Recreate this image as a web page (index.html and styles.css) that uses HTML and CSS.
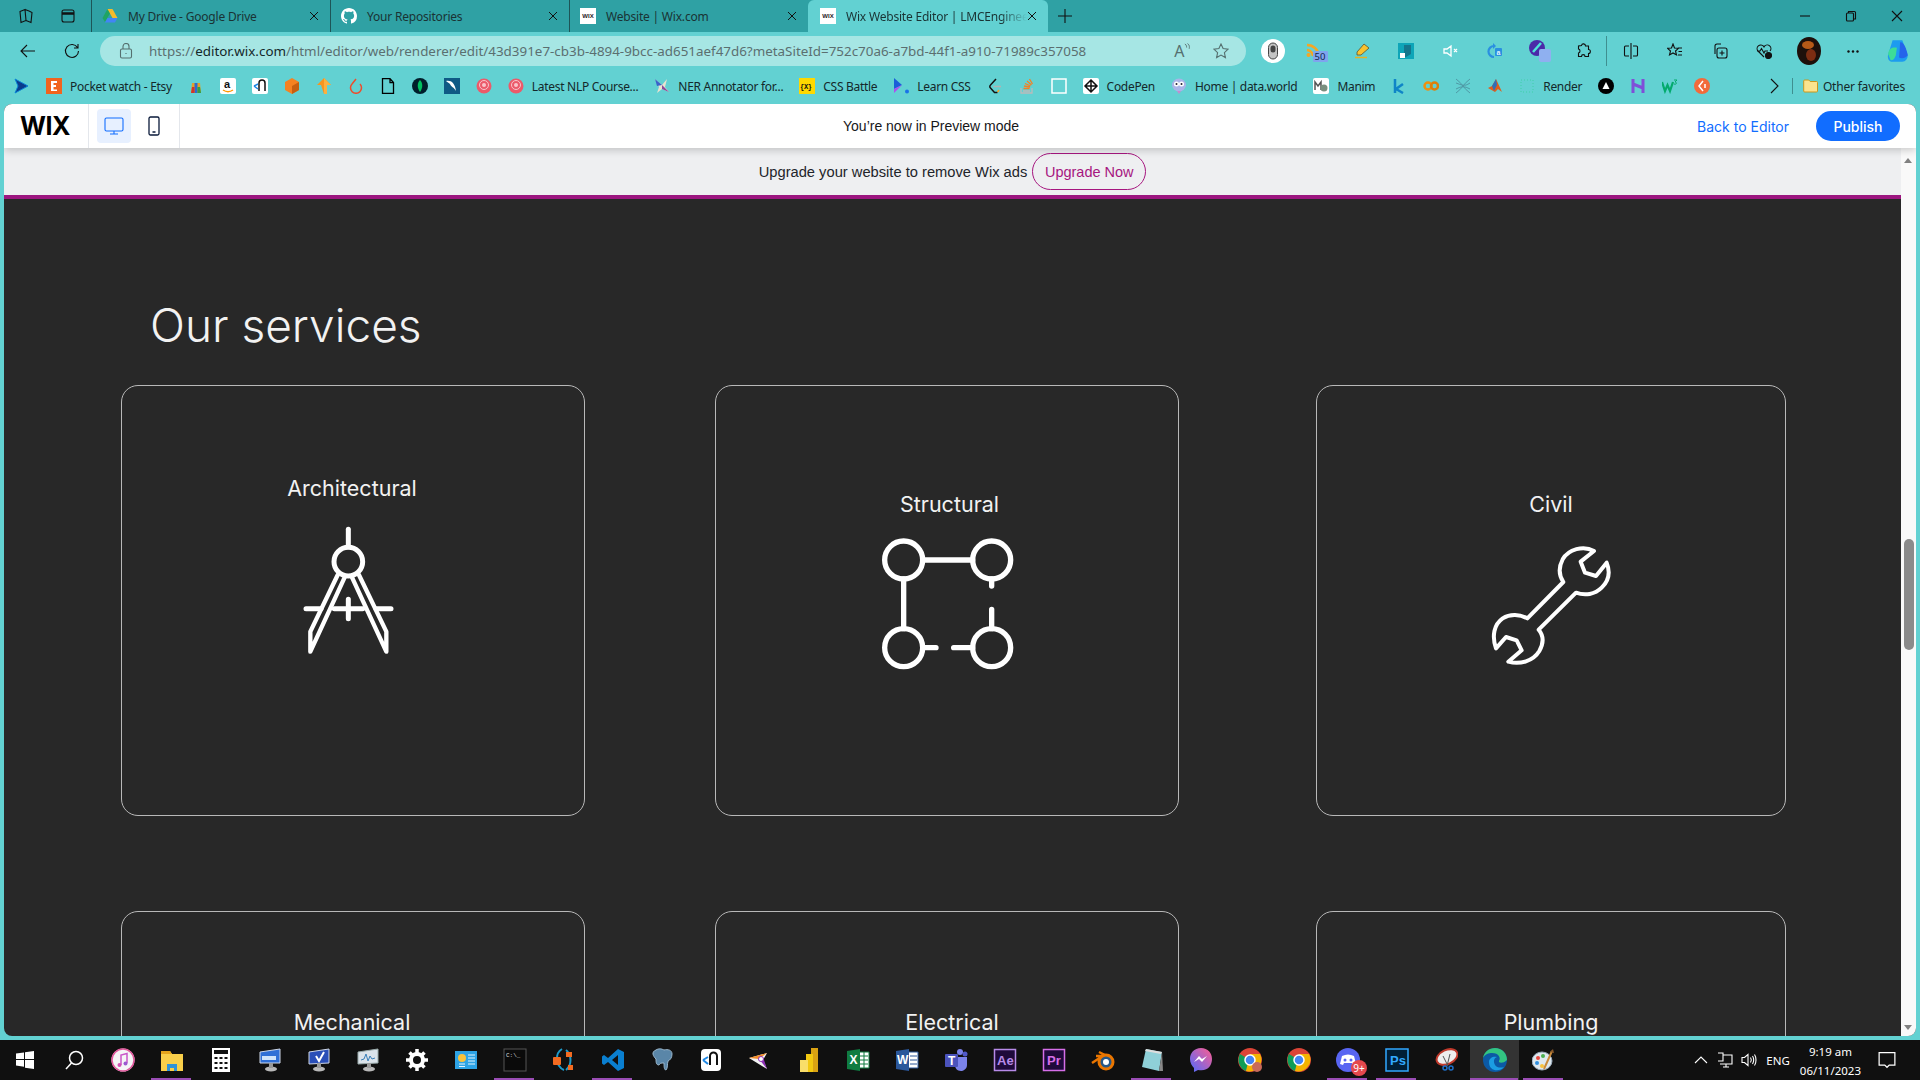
FILE: index.html
```html
<!DOCTYPE html>
<html lang="en">

<head>
    <meta charset="UTF-8">
    <title>Wix Website Editor | LMCEngineering</title>
    <link rel="stylesheet" href="styles.css">
</head>

<body>
    <!-- tab strip -->
    <div class="tabstrip">
        <div class="strip-btn"><svg class="ico" viewBox="0 0 16 16"><path d="M2 3.500l5-2 1 11-5 2zM7 1.500l4 1.500M11 3l3 1.500-1 10-5-2" /></svg></div>
        <div class="strip-btn"><svg class="ico" viewBox="0 0 16 16"><rect x="2" y="2" width="12" height="12" rx="2" /><path d="M2 5.500h12" stroke-width="2.500" /></svg></div>
        <div class="tab">
            <svg class="fav" viewBox="0 0 16 16"><path d="M5.500 1h5l-2.500 5-2.500-4z" fill="#f7bb2a" /><path d="M10.500 1l5 9h-5L7.700 5z" fill="#f7bb2a" /><path d="M5.500 1L.500 10l2.500 4 5-8.500z" fill="#1fa463" /><path d="M3 14.500h10l2.500-4.500H5.500z" fill="#4285f4" /></svg>
            <span class="tab-title">My Drive - Google Drive</span>
            <svg class="tab-x" viewBox="0 0 10 10"><path d="M1 1l8 8M9 1L1 9" /></svg>
        </div>
        <div class="tab">
            <svg class="fav" viewBox="0 0 16 16"><path fill="#fff" d="M8 0C3.580 0 0 3.580 0 8c0 3.540 2.290 6.530 5.470 7.590.4.07.55-.17.55-.38 0-.19-.01-.82-.01-1.490-2.010.37-2.530-.49-2.690-.94-.09-.23-.48-.94-.82-1.130-.28-.15-.68-.52-.01-.53.63-.01 1.080.58 1.230.82.72 1.210 1.870.87 2.330.66.07-.52.28-.87.51-1.070-1.780-.2-3.640-.89-3.640-3.950 0-.87.31-1.590.82-2.150-.08-.2-.36-1.020.08-2.120 0 0 .67-.21 2.200.82.64-.18 1.320-.27 2-.27.68 0 1.360.09 2 .27 1.530-1.040 2.200-.82 2.200-.82.44 1.100.16 1.920.08 2.120.51.56.82 1.270.82 2.150 0 3.070-1.870 3.750-3.650 3.950.29.25.54.73.54 1.480 0 1.070-.01 1.930-.01 2.200 0 .21.15.46.55.38A8.013 8.013 0 0016 8c0-4.420-3.580-8-8-8z" /></svg>
            <span class="tab-title">Your Repositories</span>
            <svg class="tab-x" viewBox="0 0 10 10"><path d="M1 1l8 8M9 1L1 9" /></svg>
        </div>
        <div class="tab">
            <span class="wix-fav">WIX</span>
            <span class="tab-title">Website | Wix.com</span>
            <svg class="tab-x" viewBox="0 0 10 10"><path d="M1 1l8 8M9 1L1 9" /></svg>
        </div>
        <div class="tab active">
            <span class="wix-fav">WIX</span>
            <span class="tab-title fade">Wix Website Editor | LMCEnginee</span>
            <svg class="tab-x" viewBox="0 0 10 10"><path d="M1 1l8 8M9 1L1 9" /></svg>
        </div>
        <div class="new-tab"><svg class="ico" viewBox="0 0 16 16"><path d="M8 1v14M1 8h14" /></svg></div>
        <div class="win-btns">
            <div class="win-btn"><svg class="ico small" viewBox="0 0 12 12"><path d="M1 6h10" /></svg></div>
            <div class="win-btn"><svg class="ico small" viewBox="0 0 12 12"><rect x="1.500" y="3" width="7" height="8" rx="1" /><path d="M3.500 3V1.500h6a1 1 0 0 1 1 1V9H8.500" /></svg></div>
            <div class="win-btn"><svg class="ico small" viewBox="0 0 12 12"><path d="M1 1l10 10M11 1L1 11" /></svg></div>
        </div>
    </div>

    <!-- address bar -->
    <div class="toolbar">
        <div class="tool"><svg class="ico" viewBox="0 0 16 16"><path d="M15 8H1M7 2L1 8l6 6" /></svg></div>
        <div class="tool"><svg class="ico" viewBox="0 0 16 16"><path d="M13.500 4.500A6.500 6.500 0 1 0 14.500 8M14 1v4h-4" /></svg></div>
        <div class="omnibox">
            <svg class="ico grey" viewBox="0 0 16 16"><rect x="2.500" y="6" width="11" height="9" rx="1.500" /><path d="M5 6V3.500a3 3 0 0 1 6 0V6M8 10v1" /></svg>
            <span class="url">https://<b>editor.wix.com</b>/html/editor/web/renderer/edit/43d391e7-cb3b-4894-9bcc-ad651aef47d6?metaSiteId=752c70a6-a7bd-44f1-a910-71989c357058</span>
            <div class="omni-end">
                <span class="read-aloud">A<svg class="ico grey mini" viewBox="0 0 8 10"><path d="M1 1c2 1 2 3 2 4M4 .5c3 2 2 5 2 6" /></svg></span>
                <svg class="ico grey star" viewBox="0 0 16 16"><path d="M8 1l2.100 4.600 5 .6-3.700 3.400 1 5L8 12.100 3.600 14.600l1-5L.9 6.200l5-.6z" /></svg>
            </div>
        </div>
        <div class="tools">
            <div class="tool"><svg class="ext" viewBox="0 0 24 24"><circle cx="12" cy="12" r="12" fill="#fff" /><rect x="7.500" y="4" width="9" height="16" rx="4.500" fill="#c4c4c4" stroke="#444" /><rect x="9.500" y="6.500" width="5" height="7" rx="2.500" fill="#444" /></svg></div>
            <div class="tool"><svg class="ext s22" viewBox="0 0 22 22"><path d="M1 5a12 12 0 0 1 12 11M1 10a7 7 0 0 1 6 6" fill="none" stroke="#f5a623" stroke-width="2.500" /><circle cx="2.500" cy="15" r="2" fill="#f5a623" /><rect x="7" y="11" width="15" height="11" rx="1" fill="#7fa4ee" /><text x="8.500" y="20.300" class="ext-num">50</text></svg></div>
            <div class="tool"><svg class="ext s16" viewBox="0 0 16 16"><path d="M3 9l7-8 5 4-8 7H3z" fill="#f9c22e" stroke="#5b5330" stroke-width=".8" /><path d="M1 14.500h12" stroke="#e8b21f" stroke-width="1.500" /></svg></div>
            <div class="tool"><svg class="ext s16" viewBox="0 0 16 16"><rect width="16" height="16" fill="#0ea5b8" /><path d="M6 2h7v9l-5 3H6z" fill="#14768c" /><rect x="2" y="10" width="5" height="5" fill="#fff" /></svg></div>
            <div class="tool"><svg class="ico white" viewBox="0 0 16 16"><path d="M1 6h3l4-3v10l-4-3H1zM11 6l3 3M14 6l-3 3" stroke-width="1.300" /></svg></div>
            <div class="tool"><svg class="ext s16" viewBox="0 0 16 16"><path d="M7 3a5.500 5.500 0 1 0 0 11" fill="none" stroke="#2a8fe0" stroke-width="2.200" /><path d="M6 0l3 3-3 3z" fill="#2a8fe0" /><rect x="8" y="5" width="7" height="8" rx="1" fill="#2a8fe0" /><text x="9.500" y="11.500" class="ext-a">a</text></svg></div>
            <div class="tool"><svg class="ext s22" viewBox="0 0 22 22"><circle cx="8" cy="8" r="8" fill="#4b2aa8" /><path d="M4 12l8-9" stroke="#4fe3d9" stroke-width="2.500" /><rect x="10" y="9" width="12" height="13" rx="2" fill="#8fb0f0" /></svg></div>
            <div class="tool sep"><svg class="ico" viewBox="0 0 16 16"><path d="M5.500 2.500c.5-2.500 4-2 4 .500h3v3.500c2.500 0 2.500 4 0 4v3H9c0-2.500-3.500-2.500-3.500 0h-3v-3.500c2-.5 2-3.500 0-4V3z" /></svg></div>
            <div class="tool after-sep"><svg class="ico" viewBox="0 0 16 16"><path d="M8 0v16M6 3H2.500a1 1 0 0 0-1 1v8a1 1 0 0 0 1 1H6M10 3h3.500a1 1 0 0 1 1 1v8a1 1 0 0 1-1 1H10" /></svg></div>
            <div class="tool"><svg class="ico" viewBox="0 0 16 16"><path d="M6 1l1.500 4 4 .3-3 2.700 1 4L6 10l-3.500 2 1-4-3-2.700 4-.3zM11 5h4M11.500 8.500H15M11 12h4" /></svg></div>
            <div class="tool"><svg class="ico" viewBox="0 0 16 16"><path d="M3 11V3a2 2 0 0 1 2-2h4" /><rect x="5" y="5" width="10" height="10" rx="2" /><path d="M10 7.500v5M7.500 10h5" /></svg></div>
            <div class="tool"><svg class="ico" viewBox="0 0 16 16"><path d="M8 14L2 8a3.600 3.600 0 0 1 5.500-4.800L8 4l.5-.8A3.600 3.600 0 0 1 14 8M1 8h3l1.500-2.500L8 10l1-2h3" /><circle cx="12.500" cy="12.500" r="3" fill="#111" /></svg></div>
            <div class="tool"><svg class="ext avatar" viewBox="0 0 24 28"><ellipse cx="12" cy="14" rx="12" ry="14" fill="#1d100b" /><ellipse cx="11" cy="8" rx="6" ry="4" fill="#b65a18" /><ellipse cx="14" cy="18" rx="5" ry="6" fill="#7c2d12" /></svg></div>
            <div class="tool"><svg class="dots" viewBox="0 0 12 3"><circle cx="1.500" cy="1.500" r="1.200" /><circle cx="6" cy="1.500" r="1.200" /><circle cx="10.500" cy="1.500" r="1.200" /></svg></div>
            <div class="tool"><svg class="ext copilot" viewBox="0 0 24 24"><path d="M7 2h9l5 14c0 3-2 6-5 6H7c-4 0-5-4-4-7z" fill="#1d9bf0" /><path d="M3 15c0-6 5-7 8-6l-1 7c-1 3-3 6-5 4z" fill="#3ddc97" /><path d="M14 4c3-1 6 6 7 12-2 3-6 3-8 2z" fill="#2563eb" /></svg></div>
        </div>
    </div>

    <!-- favorites bar -->
    <div class="bookmarks">
        <div class="bm first"><svg class="fav" viewBox="0 0 16 16"><path d="M2 1l13 7-13 7 3-7z" fill="#0b3c8c" stroke="#0a84d6" /></svg></div>
        <div class="bm"><svg class="fav" viewBox="0 0 16 16"><rect width="16" height="16" fill="#f1641e" /><path d="M5 3h6v2H7.500v2H10v2H7.500v2.500H11V13H5z" fill="#fff" /></svg><span>Pocket watch - Etsy</span></div>
        <div class="bm"><svg class="fav" viewBox="0 0 16 16"><path d="M4 5h8l1 10H3z" fill="#e3a12a" /><path d="M6.500 5h3v10h-3z" fill="#2a6bd1" /><path d="M4 9h2.500v6H3z" fill="#d1352a" /><path d="M9.500 9H12l1 6H9.500z" fill="#2f9e46" /></svg></div>
        <div class="bm"><svg class="fav" viewBox="0 0 16 16"><rect width="16" height="16" rx="2" fill="#fff" /><text x="4" y="10" class="fav-a">a</text><path d="M3 12c3 2 7 2 10 0" fill="none" stroke="#f90" stroke-width="1.500" /></svg></div>
        <div class="bm"><svg class="fav" viewBox="0 0 16 16"><rect width="16" height="16" rx="2" fill="#fff" /><path d="M7 13V5a3 3 0 0 1 6 0v8" fill="none" stroke="#111" stroke-width="1.500" /><path d="M2 8l4-2M2 8l4 3" stroke="#1e88e5" stroke-width="1.500" /></svg></div>
        <div class="bm"><svg class="fav" viewBox="0 0 16 16"><path d="M8 0l7 4v8l-7 4-7-4V4z" fill="#f58220" /><path d="M8 8l7-4v8l-7 4z" fill="#c75f10" /></svg></div>
        <div class="bm"><svg class="fav" viewBox="0 0 16 16"><path d="M8 0l7 7h-4v9H8L5 7H1z" fill="#f7941e" /><path d="M8 0l7 7h-4v9H8z" fill="#fbb040" /></svg></div>
        <div class="bm"><svg class="fav" viewBox="0 0 16 16"><path d="M8 1L4 6a5.500 5.500 0 1 0 8 0" fill="none" stroke="#ee4c2c" stroke-width="1.500" /></svg></div>
        <div class="bm"><svg class="fav" viewBox="0 0 16 16"><path d="M2.500 .7H10L13.500 4.500v10.800h-11zM10 .7v4h3.500" fill="#62d1d2" stroke="#000" stroke-width="1.300" /></svg></div>
        <div class="bm"><svg class="fav" viewBox="0 0 16 16"><circle cx="8" cy="8" r="8" fill="#001e2b" /><path d="M8 2c3 3 3 8 0 12-3-4-3-9 0-12z" fill="#00c060" /></svg></div>
        <div class="bm"><svg class="fav" viewBox="0 0 16 16"><rect width="16" height="16" fill="#0f5a85" /><path d="M2 3c5-1 9 2 10 10-2-4-5-4-6-7-1-1-3-2-4-3z" fill="#fff" /></svg></div>
        <div class="bm"><svg class="fav" viewBox="0 0 16 16"><circle cx="8" cy="8" r="7.500" fill="#ec5a6a" /><circle cx="8" cy="7" r="4.500" fill="none" stroke="#f9c3c9" /><circle cx="8" cy="7" r="2" fill="#f9c3c9" /></svg></div>
        <div class="bm"><svg class="fav" viewBox="0 0 16 16"><circle cx="8" cy="8" r="7.500" fill="#ec5a6a" /><circle cx="8" cy="7" r="4.500" fill="none" stroke="#f9c3c9" /><circle cx="8" cy="7" r="2" fill="#f9c3c9" /></svg><span>Latest NLP Course...</span></div>
        <div class="bm"><svg class="fav" viewBox="0 0 16 16"><path d="M1 1l7 6 5-6-2 8 4 5-7-3-5 4 2-6z" fill="#e9e2d0" /><path d="M1 1l7 6-5 1z" fill="#3a63c9" /><path d="M8 7l7 7-7-3z" fill="#8a4a9c" /></svg><span>NER Annotator for...</span></div>
        <div class="bm"><svg class="fav" viewBox="0 0 16 16"><rect width="16" height="16" fill="#ffd900" /><text x="1" y="11" class="fav-x">{X}</text></svg><span>CSS Battle</span></div>
        <div class="bm"><svg class="fav" viewBox="0 0 16 16"><path d="M1 0l8 7-8 4z" fill="#1a5fd8" /><path d="M1 11l8-4-8 8z" fill="#b04cf0" /><circle cx="14" cy="13.500" r="2" fill="#1a73e8" /></svg><span>Learn CSS</span></div>
        <div class="bm"><svg class="fav" viewBox="0 0 16 16"><path d="M9 1L3.500 7a2 2 0 0 0 0 3l4 4.500h3" fill="none" stroke="#111" stroke-width="1.500" /><path d="M6.500 8.500H14" stroke="#b3b3b3" stroke-width="1.500" /><path d="M10.500 14l1.500-2" stroke="#f89f1b" stroke-width="1.500" /></svg></div>
        <div class="bm"><svg class="fav" viewBox="0 0 16 16"><path d="M2 10v5h11v-5M4 13h7" fill="none" stroke="#bcbbbb" stroke-width="1.300" /><path d="M4.500 10.500h6M5 8l6 1M6 5.500l5.500 2.500M8 3l4.500 4M10.500 1l3 5" stroke="#f48024" stroke-width="1.300" /></svg></div>
        <div class="bm"><svg class="fav" viewBox="0 0 16 16"><rect x="1" y="1" width="14" height="14" fill="#62d1d2" stroke="#fff" stroke-width="1.500" /></svg></div>
        <div class="bm"><svg class="fav" viewBox="0 0 16 16"><rect width="16" height="16" rx="2" fill="#fff" /><path d="M8 2l6 6-6 6-6-6zM8 2v12M2 8h12" fill="none" stroke="#111" stroke-width="1.500" /></svg><span>CodePen</span></div>
        <div class="bm"><svg class="fav" viewBox="0 0 16 16"><ellipse cx="8" cy="7" rx="7" ry="6.500" fill="#a9b4e8" /><circle cx="5.500" cy="6" r="2.500" fill="#fff" /><circle cx="10.500" cy="6" r="2.500" fill="#fff" /><circle cx="5.500" cy="6" r="1" fill="#223" /><circle cx="10.500" cy="6" r="1" fill="#223" /><path d="M6 13h4l-2 3z" fill="#c58bd0" /></svg><span>Home | data.world</span></div>
        <div class="bm"><svg class="fav" viewBox="0 0 16 16"><rect width="16" height="16" rx="2" fill="#fff" /><path d="M2 12V4l3 4 3-4v8" fill="none" stroke="#555" stroke-width="1.500" /><circle cx="11" cy="10" r="3.500" fill="#7a8f7f" /></svg><span>Manim</span></div>
        <div class="bm"><svg class="fav" viewBox="0 0 16 16"><path d="M4 1v14M12 6L5 11l7 4" fill="none" stroke="#0f85c7" stroke-width="2.500" /></svg></div>
        <div class="bm"><svg class="fav" viewBox="0 0 16 16"><circle cx="5" cy="8" r="3.500" fill="none" stroke="#f0900f" stroke-width="2.500" /><circle cx="11.500" cy="8" r="3.500" fill="none" stroke="#dd7f0a" stroke-width="2.500" /></svg></div>
        <div class="bm"><svg class="fav" viewBox="0 0 16 16"><path d="M1 1c6 4 8 10 14 14M15 1C9 5 7 11 1 15M1 5c6 2 8 4 14 0M1 11c6-3 8-3 14 0" fill="none" stroke="#4f9aa6" /></svg></div>
        <div class="bm"><svg class="fav" viewBox="0 0 16 16"><path d="M1 10l4-2 4-7 6 13-4-3-3 3z" fill="#e05d1a" /><path d="M5 8l4-7 1 6-3 6z" fill="#2f6fb8" /></svg></div>
        <div class="bm"><svg class="fav" viewBox="0 0 16 16"><rect x="2" y="2" width="12" height="12" fill="none" stroke="#3fd0a8" stroke-dasharray="1 2" /></svg><span>Render</span></div>
        <div class="bm"><svg class="fav" viewBox="0 0 16 16"><circle cx="8" cy="8" r="8" fill="#000" /><path d="M8 4l3.500 7h-7z" fill="#fff" /></svg></div>
        <div class="bm"><svg class="fav" viewBox="0 0 16 16"><path d="M3 1v14M13 1v14M3 6l10 4" fill="none" stroke="#7f4fd8" stroke-width="3" /></svg></div>
        <div class="bm"><svg class="fav" viewBox="0 0 16 16"><path d="M0 4l3 9 2.500-6 2.500 6 3-9" fill="none" stroke="#04aa6d" stroke-width="2.200" /><path d="M12 2h3l-2 2c2 0 2 3-1 2" fill="none" stroke="#04aa6d" /></svg></div>
        <div class="bm"><svg class="fav" viewBox="0 0 16 16"><circle cx="8" cy="8" r="8" fill="#f26b3a" /><path d="M9 3L5 8l4 5M11 6v4" fill="none" stroke="#fff" stroke-width="1.500" /></svg></div>
        <div class="bm-more"><svg class="ico" viewBox="0 0 16 16"><path d="M5 1l7 7-7 7" /></svg></div>
        <div class="bm other"><svg class="fav" viewBox="0 0 16 16"><path d="M.7 3a1 1 0 0 1 1-1h4l1.500 1.500h6.300a1 1 0 0 1 1 1V13a1 1 0 0 1-1 1H1.700a1 1 0 0 1-1-1z" fill="#fbe38e" stroke="#c9971c" /></svg><span>Other favorites</span></div>
    </div>

    <!-- page in the browser window -->
    <div class="viewport">
        <div class="wix-bar">
            <div class="wix-logo">WIX</div>
            <div class="devices">
                <div class="device selected"><svg class="ico blue" viewBox="0 0 20 20"><rect x="1" y="2" width="18" height="13" rx="1.500" /><path d="M10 15v3M6 18h8" /></svg></div>
                <div class="device"><svg class="ico navy" viewBox="0 0 20 20"><rect x="5" y="1" width="10" height="18" rx="1.500" /><path d="M8.500 16h3" /></svg></div>
            </div>
            <div class="preview-note">You’re now in Preview mode</div>
            <a class="back-editor">Back to Editor</a>
            <button class="publish">Publish</button>
        </div>

        <div class="page">
            <div class="site">
                <div class="upgrade-banner">
                    <span>Upgrade your website to remove Wix ads</span>
                    <button class="upgrade-btn">Upgrade Now</button>
                </div>

                <div class="services">
                    <h1>Our services</h1>
                    <div class="service-grid">
                        <div class="card">
                            <h3 class="shift-left">Architectural</h3>
                            <svg class="service-icon compass" viewBox="0 0 450 480">
                                <path d="M232 58V110" />
                                <circle cx="232" cy="155" r="43" />
                                <path d="M105 296H150M190 296H275M315 296H360M232 268V326" />
                                <path d="M200 195L118 365V425L222 200" stroke-width="13" />
                                <path d="M264 195L346 365V425L242 200" stroke-width="13" />
                            </svg>
                        </div>
                        <div class="card">
                            <h3 class="low nudge">Structural</h3>
                            <svg class="service-icon structure" viewBox="0 0 480 480">
                                <circle cx="128" cy="120" r="57" />
                                <circle cx="392" cy="120" r="57" />
                                <circle cx="128" cy="383" r="57" />
                                <circle cx="392" cy="383" r="57" />
                                <path d="M185 120H335M128 177V326M392 177V198M392 268V326M185 383H225M278 383H335" />
                            </svg>
                        </div>
                        <div class="card wide">
                            <h3 class="low">Civil</h3>
                            <svg class="service-icon wrench" viewBox="0 0 450 450">
                                <path stroke-width="12" d="M372 60C340 42 295 55 278 85C265 110 268 135 280 153L172 262C150 250 120 248 98 262C72 280 65 315 78 352L108 318L140 328L155 358L115 392C150 402 190 390 208 360C222 335 222 315 206 296L318 185C345 195 375 190 395 170C418 148 420 120 410 95L378 135L345 125L332 92Z" />
                            </svg>
                        </div>
                        <div class="card row-two"><h3 class="shift-left">Mechanical</h3></div>
                        <div class="card row-two"><h3 class="nudge-more">Electrical</h3></div>
                        <div class="card wide row-two"><h3>Plumbing</h3></div>
                    </div>
                </div>
            </div>
            <div class="scrollbar">
                <span class="arrow-up"></span>
                <span class="thumb"></span>
                <span class="arrow-down"></span>
            </div>
        </div>
    </div>

    <!-- windows taskbar -->
    <div class="taskbar">
        <div class="task"><svg class="tb" viewBox="0 0 24 24"><path d="M3 5.500l8-1.100V11H3zM12 4.200L21 3v8h-9zM3 12h8v6.700l-8-1.100zM12 12h9v9l-9-1.200z" fill="#fff" /></svg></div>
        <div class="task"><svg class="tb" viewBox="0 0 24 24"><circle cx="14" cy="10" r="6.500" fill="none" stroke="#fff" stroke-width="1.500" /><path d="M9.500 15L4 21" stroke="#fff" stroke-width="1.500" /></svg></div>
        <div class="task"><svg class="tb" viewBox="0 0 24 24"><circle cx="12" cy="12" r="11.500" fill="#f5f5f7" /><circle cx="12" cy="12" r="11" fill="none" stroke="#e0569b" stroke-width="1.500" /><path d="M10 17V7l6-1.500V15" fill="none" stroke="#c956c9" stroke-width="1.500" /><circle cx="8.500" cy="17" r="2" fill="#d24fb5" /><circle cx="14.500" cy="15.500" r="2" fill="#9b59d0" /></svg></div>
        <div class="task on"><svg class="tb" viewBox="0 0 24 24"><path d="M1 3h9l2 3h11v17H1z" fill="#f9cf4a" /><path d="M1 3h9l2 3H1z" fill="#e5a51d" /><path d="M7 16h10v7h-3v-3h-4v3H7z" fill="#2f93d8" /></svg></div>
        <div class="task"><svg class="tb" viewBox="0 0 24 24"><rect x="3" y="0" width="18" height="24" fill="#fff" /><rect x="5" y="2" width="14" height="4" fill="#111" /><path d="M5.500 9h3v2h-3zM10.500 9h3v2h-3zM15.500 9h3v2h-3zM5.500 14h3v2h-3zM10.500 14h3v2h-3zM15.500 14h3v2h-3zM5.500 19h3v2h-3zM10.500 19h3v2h-3zM15.500 19h3v2h-3z" fill="#111" /></svg></div>
        <div class="task"><svg class="tb" viewBox="0 0 24 24"><path d="M2 4l20-3v14L2 15z" fill="#2f6fd6" stroke="#cfd8e8" /><path d="M4 8h14v4H4z" fill="#cfe3fa" /><ellipse cx="13" cy="21" rx="6" ry="2.500" fill="#b8b8b8" /><path d="M11 15h4v5h-4z" fill="#999" /></svg></div>
        <div class="task"><svg class="tb" viewBox="0 0 24 24"><path d="M2 4l20-3v14L2 16z" fill="#2a4fb8" stroke="#cfd8e8" /><path d="M9 8l3 5 5-9" fill="none" stroke="#fff" stroke-width="2" /><ellipse cx="12" cy="21" rx="6" ry="2.500" fill="#b8b8b8" /><path d="M10 15h4v5h-4z" fill="#999" /></svg></div>
        <div class="task"><svg class="tb" viewBox="0 0 24 24"><path d="M2 4l20-3v14L2 16z" fill="#dbe3ea" stroke="#9aa" /><path d="M5 12l3-1 2-5 2 7 2-5 2 3 3-1" fill="none" stroke="#3a7fb8" /><ellipse cx="13" cy="21" rx="6" ry="2.500" fill="#b8b8b8" /><path d="M11 15h4v5h-4z" fill="#999" /></svg></div>
        <div class="task"><svg class="tb" viewBox="0 0 24 24"><circle cx="12" cy="12" r="6" fill="none" stroke="#fff" stroke-width="4" /><path d="M12 1v4M12 19v4M1 12h4M19 12h4M4.500 4.500l2.800 2.800M16.700 16.700l2.800 2.800M19.500 4.500l-2.800 2.800M7.300 16.700l-2.800 2.800" stroke="#fff" stroke-width="3.500" /></svg></div>
        <div class="task"><svg class="tb" viewBox="0 0 24 24"><rect x="1" y="3" width="22" height="18" fill="#2da3e6" /><circle cx="8" cy="10" r="4" fill="#f9c23c" /><path d="M5 16h6M5 18.500h6M14 7h7M14 10h7M14 13h7M14 16h7" stroke="#e3f4fd" /></svg></div>
        <div class="task on"><svg class="tb" viewBox="0 0 24 24"><rect x="1" y="1" width="22" height="22" fill="#0a0a0a" stroke="#555" /><text x="3" y="9" class="tb-cmd">C:\_</text></svg></div>
        <div class="task"><svg class="tb" viewBox="0 0 24 24"><path d="M10 1C3 5 3 18 12 22" fill="none" stroke="#1f9ac9" stroke-width="2" /><path d="M14 2c6 5 6 15 0 20" fill="none" stroke="#1f9ac9" stroke-width="2" /><rect x="1" y="9" width="8" height="8" rx="1" fill="#f26b21" /><rect x="14" y="4" width="6" height="5" fill="#f26b21" /><rect x="16" y="17" width="5" height="5" fill="#f26b21" /></svg></div>
        <div class="task on"><svg class="tb" viewBox="0 0 24 24"><path d="M17 1l6 3v16l-6 3L7 14l-4 3-2-1.500V8.500L3 7l4 3z" fill="#0a7fd0" /><path d="M17 7l-6 5 6 5z" fill="#101010" /></svg></div>
        <div class="task"><svg class="tb" viewBox="0 0 24 24"><path d="M6 2c3-2 6-1 8 0 4-1 8 0 8 4 0 4-2 6-4 7-1 3 0 7-2 9-2 0-2-4-2-7-3 0-4 0-5 2-3 0-3-3-3-6-3-3-5-7 0-9z" fill="#5a86a8" stroke="#9bb7cc" /></svg></div>
        <div class="task"><svg class="tb" viewBox="0 0 24 24"><rect x="2" y="1" width="20" height="22" rx="4" fill="#fff" /><path d="M11 17V8a3.500 3.500 0 0 1 7 0v9" fill="none" stroke="#111" stroke-width="2" /><path d="M4 12l5-3M4 12l5 4" stroke="#1e88e5" stroke-width="2" /></svg></div>
        <div class="task"><svg class="tb" viewBox="0 0 24 24"><path d="M1 10l18-5-4 7 4 9z" fill="#f2f2f2" /><path d="M1 10l10 1 8-6z" fill="#f28c28" /><path d="M11 11l8 10-3-9z" fill="#8e2fb5" /><circle cx="13" cy="11" r="2.500" fill="#fff" stroke="#8e2fb5" /></svg></div>
        <div class="task"><svg class="tb" viewBox="0 0 24 24"><rect x="14" y="0" width="7" height="24" fill="#d9a213" /><rect x="9" y="6" width="7" height="18" fill="#f2c811" /><rect x="3" y="12" width="8" height="12" fill="#f9de6a" /></svg></div>
        <div class="task"><svg class="tb" viewBox="0 0 24 24"><path d="M12 4h11v16H12z" fill="#fff" stroke="#107c41" /><path d="M14 8h8M14 12h8M14 16h8M18 4v16" stroke="#107c41" /><path d="M1 3l13-2v22L1 21z" fill="#107c41" /><text x="3.500" y="16" class="tb-letter">X</text></svg></div>
        <div class="task"><svg class="tb" viewBox="0 0 24 24"><path d="M12 4h11v16H12z" fill="#fff" stroke="#2b579a" /><path d="M15 8h7M15 12h7M15 16h7" stroke="#2b579a" /><path d="M1 3l13-2v22L1 21z" fill="#2b579a" /><text x="2" y="16" class="tb-letter">W</text></svg></div>
        <div class="task"><svg class="tb" viewBox="0 0 24 24"><circle cx="16" cy="4" r="3" fill="#7b83eb" /><circle cx="21" cy="6" r="2.500" fill="#5059c9" /><path d="M13 9h10v8c0 4-4 6-6 6-4 0-6-3-6-6z" fill="#7b83eb" /><rect x="1" y="6" width="13" height="13" rx="1" fill="#4b53bc" /><text x="4" y="16.500" class="tb-letter">T</text></svg></div>
        <div class="task"><svg class="tb" viewBox="0 0 24 24"><rect x="1.500" y="1.500" width="21" height="21" fill="#1f0a3b" stroke="#b78ae8" stroke-width="1.500" /><text x="4" y="17" class="tb-ae">Ae</text></svg></div>
        <div class="task"><svg class="tb" viewBox="0 0 24 24"><rect x="1.500" y="1.500" width="21" height="21" fill="#1f0a3b" stroke="#d56ee8" stroke-width="1.500" /><text x="5" y="17" class="tb-pr">Pr</text></svg></div>
        <div class="task"><svg class="tb" viewBox="0 0 24 24"><circle cx="15" cy="14" r="7" fill="#265787" stroke="#ea7600" stroke-width="3" /><circle cx="15" cy="14" r="3" fill="#fff" /><path d="M1 15l9-6M5 8h7M8 4l6 3" stroke="#ea7600" stroke-width="2.500" /></svg></div>
        <div class="task on"><svg class="tb" viewBox="0 0 24 24"><path d="M6 1l16 3-3 19-17-4z" fill="#8fd0d8" /><path d="M6 1l16 3-1 2-16-3z" fill="#ddd" /><path d="M19 23l3-19 1 19z" fill="#888" /></svg></div>
        <div class="task"><svg class="tb" viewBox="0 0 24 24"><defs><linearGradient id="msg" x1="0" y1="1" x2="1" y2="0"><stop offset="0" stop-color="#4f6bff" /><stop offset="1" stop-color="#ff5d8f" /></linearGradient></defs><path d="M12 0C5 0 1 5 1 11c0 4 2 7 4 9v4l4-2c10 2 14-5 14-11 0-6-4-11-11-11z" fill="url(#msg)" /><path d="M5 14l5-6 3 3 5-3-5 6-3-3z" fill="#fff" /></svg></div>
        <div class="task"><svg class="tb" viewBox="0 0 24 24"><circle cx="12" cy="12" r="12" fill="#db4437" /><path d="M12 12L2 6a12 12 0 0 0 6 17z" fill="#0f9d58" /><path d="M12 6h10a12 12 0 0 1-14 17z" fill="#f4b400" /><circle cx="12" cy="12" r="5" fill="#4285f4" stroke="#fff" stroke-width="1.500" /><circle cx="19" cy="19" r="5" fill="#c96a5a" /></svg></div>
        <div class="task"><svg class="tb" viewBox="0 0 24 24"><circle cx="12" cy="12" r="12" fill="#db4437" /><path d="M12 12L2 6a12 12 0 0 0 6 17z" fill="#0f9d58" /><path d="M12 6h10a12 12 0 0 1-14 17z" fill="#f4b400" /><circle cx="12" cy="12" r="5" fill="#4285f4" stroke="#fff" stroke-width="1.500" /></svg></div>
        <div class="task on"><svg class="tb" viewBox="0 0 24 24"><circle cx="12" cy="12" r="12" fill="#5865f2" /><path d="M6 8c4-2 8-2 12 0l2 8-3 1-1-2H8l-1 2-3-1z" fill="#fff" /><circle cx="9" cy="12" r="1.500" fill="#5865f2" /><circle cx="15" cy="12" r="1.500" fill="#5865f2" /></svg><span class="badge">9+</span></div>
        <div class="task on"><svg class="tb" viewBox="0 0 24 24"><rect x="1" y="1" width="22" height="22" fill="#001e36" stroke="#31a8ff" stroke-width="1.500" /><text x="5" y="17" class="tb-ps">Ps</text></svg></div>
        <div class="task"><svg class="tb" viewBox="0 0 24 24"><ellipse cx="13" cy="9" rx="11" ry="7" fill="#eee" stroke="#c0392b" stroke-width="2" transform="rotate(-25 13 9)" /><path d="M9 8l5 10M16 6l-3 12" stroke="#555" /><circle cx="11" cy="20" r="2" fill="none" stroke="#1f6fc9" stroke-width="1.500" /><circle cx="17" cy="20" r="2" fill="none" stroke="#1f6fc9" stroke-width="1.500" /></svg></div>
        <div class="task current on"><svg class="tb" viewBox="0 0 24 24"><circle cx="12" cy="12" r="12" fill="#0c59a4" /><path d="M24 12c0-7-5-12-12-12C6 0 1 4 0 10c2-4 6-5 9-5 7 0 9 5 7 8-1 2 4 3 8-1z" fill="#33c481" /><path d="M6 14c0-4 4-6 8-5-3 1-4 4-2 8 2 3 6 3 9 2-4 5-15 5-15-5z" fill="#1b9de2" /></svg></div>
        <div class="task on"><svg class="tb" viewBox="0 0 24 24"><ellipse cx="10" cy="13" rx="10" ry="9" fill="#dfe8ee" stroke="#9ab" /><circle cx="6" cy="10" r="2" fill="#e8483f" /><circle cx="11" cy="8" r="2" fill="#4caf50" /><circle cx="5" cy="15" r="2" fill="#2f8fe0" /><circle cx="10" cy="18" r="2" fill="#f9c23c" /><path d="M12 21L20 3" stroke="#c98a3a" stroke-width="2" /><path d="M18 4l3-3 1 4z" fill="#8a5a2a" /></svg></div>

        <div class="tray">
            <svg class="ico white tray-caret" viewBox="0 0 16 16"><path d="M2 11l6-6 6 6" /></svg>
            <svg class="ico white" viewBox="0 0 16 16"><path d="M1 1h5v8H1M6 3h9v9H3M9 12v3M6 15h6" /></svg>
            <svg class="ico white" viewBox="0 0 16 16"><path d="M1 5.500h2.500L7 2.500v11L3.500 10.500H1zM9.500 5.500c1 1.500 1 3.500 0 5M11.500 4c1.500 2.500 1.500 5.500 0 8M13.500 2.500c2 3 2 8 0 11" /></svg>
            <span class="lang">ENG</span>
            <div class="clock"><span>9:19 am</span><span>06/11/2023</span></div>
            <svg class="ico white notif" viewBox="0 0 16 16"><path d="M1 1.500h14v11h-5l-2 2-2-2H1z" /></svg>
        </div>
    </div>
</body>

</html>
```

FILE: styles.css
```css
* {
    box-sizing: border-box;
}

html,
body {
    margin: 0;
    padding: 0;
    height: 1080px;
    overflow: hidden;
}

body {
    display: flex;
    flex-direction: column;
    background-color: #62d1d2;
    font-family: 'Noto Sans', sans-serif;
    color: #14282a;
}

/* shared icon styles */
.ico {
    width: 16px;
    height: 16px;
    fill: none;
    stroke: #111;
    stroke-width: 1.1;
    flex-shrink: 0;
}

.ico.small {
    width: 12px;
    height: 12px;
}

.ico.mini {
    width: 7px;
    height: 9px;
    position: absolute;
    top: 0;
    right: -6px;
}

.ico.grey {
    stroke: #55706f;
}

.ico.white {
    stroke: #fff;
}

.ico.blue {
    stroke: #116dff;
    width: 20px;
    height: 20px;
}

.ico.navy {
    stroke: #0a1a3a;
    width: 20px;
    height: 20px;
    stroke-width: 1.3;
}

.fav {
    width: 16px;
    height: 16px;
    flex-shrink: 0;
}

.ext {
    width: 24px;
    height: 24px;
}

.ext.s22 {
    width: 22px;
    height: 22px;
}

.ext.s16 {
    width: 16px;
    height: 16px;
}

.ext.avatar {
    height: 28px;
}

.ext.copilot {
    width: 26px;
    height: 28px;
}

.dots {
    width: 12px;
    height: 3px;
    fill: #111;
}

.ext-num {
    font: 400 9.5px 'Noto Sans', sans-serif;
    fill: #10254a;
}

.ext-a {
    font: 700 7px 'Liberation Sans', sans-serif;
    fill: #dff1fd;
}

.fav-a {
    font: 700 11px 'Liberation Sans', sans-serif;
    fill: #111;
}

.fav-x {
    font: 700 7px 'Liberation Mono', monospace;
    fill: #111;
}

/* tab strip */
.tabstrip {
    height: 32px;
    display: flex;
    align-items: center;
    background-color: #2fa1a4;
    flex-shrink: 0;
    padding-left: 5px;
}

.strip-btn {
    width: 42px;
    display: flex;
    justify-content: center;
}

.strip-btn + .tab {
    margin-left: 2px;
}

.tab {
    width: 239px;
    height: 32px;
    display: flex;
    align-items: center;
    padding: 0 11px 0 10px;
    font-size: 12px;
    position: relative;
    border-left: 1px solid #1d5557;
    flex-shrink: 0;
}

.tab.active {
    width: 240px;
    background-color: #62d1d2;
    border-left: none;
    border-radius: 6px 6px 0 0;
    padding-left: 12px;
}

.tab-title {
    flex: 1;
    min-width: 0;
    margin-left: 10px;
    white-space: nowrap;
    color: #1a3334;
    letter-spacing: -0.2px;
}

.tab-title.fade {
    -webkit-mask-image: linear-gradient(to right, #000 85%, transparent);
    mask-image: linear-gradient(to right, #000 85%, transparent);
}

.tab-x {
    width: 10px;
    height: 10px;
    flex-shrink: 0;
    fill: none;
    stroke: #111;
    stroke-width: 1;
}

.wix-fav {
    width: 16px;
    height: 16px;
    flex-shrink: 0;
    background: #fff;
    color: #222;
    font: 700 6px/16px 'Liberation Sans', sans-serif;
    text-align: center;
}

.new-tab {
    width: 34px;
    display: flex;
    justify-content: center;
}

.win-btns {
    margin-left: auto;
    display: flex;
}

.win-btn {
    width: 46px;
    display: flex;
    justify-content: center;
}

/* address bar */
.toolbar {
    height: 38px;
    display: flex;
    align-items: center;
    padding-left: 6px;
    flex-shrink: 0;
}

.tool {
    width: 44px;
    height: 30px;
    flex-shrink: 0;
    display: flex;
    align-items: center;
    justify-content: center;
}

.omnibox {
    width: 1147px;
    height: 30px;
    margin-left: 6px;
    padding: 0 17px 0 18px;
    display: flex;
    align-items: center;
    background-color: #a6e6e4;
    border-radius: 15px;
}

.url {
    margin-left: 15px;
    font-size: 13.4px;
    white-space: nowrap;
    color: #5b6f70;
}

.url b {
    font-weight: 400;
    color: #14282a;
}

.omni-end {
    margin-left: auto;
    display: flex;
    align-items: center;
    gap: 28px;
}

.read-aloud {
    position: relative;
    font-size: 16px;
    line-height: 16px;
    color: #55706f;
}

.tools {
    display: flex;
    margin-left: 5px;
}

.tools .tool {
    width: 44.5px;
}

.tool.sep {
    border-right: 1px solid #3f8f90;
}

.tool.after-sep {
    margin-left: 2px;
}

/* favorites bar */
.bookmarks {
    height: 34px;
    display: flex;
    align-items: center;
    flex-shrink: 0;
    padding: 0 0 2px 5px;
    font-size: 12px;
    color: #14282a;
}

.bm {
    display: flex;
    align-items: center;
    gap: 8px;
    padding: 0 8px;
    white-space: nowrap;
    letter-spacing: -0.3px;
}

.bm.first {
    margin-right: 1px;
}

.bm-more {
    margin-left: auto;
    margin-right: 2px;
    padding-right: 10px;
    border-right: 1px solid #3f8f90;
    display: flex;
}

.bm.other {
    gap: 4px;
    padding-right: 15px;
    letter-spacing: -0.2px;
}

/* browser viewport */
.viewport {
    height: 932px;
    margin: 0 4px 4px;
    display: flex;
    flex-direction: column;
    flex-shrink: 0;
    border-radius: 8px;
    overflow: hidden;
    background-color: #282828;
}

.wix-bar {
    height: 44px;
    display: flex;
    align-items: center;
    background: #fff;
    flex-shrink: 0;
    position: relative;
    z-index: 2;
    box-shadow: 0 2px 8px rgba(0, 0, 0, 0.2);
    font-size: 14px;
}

.wix-logo {
    width: 85px;
    height: 44px;
    padding-left: 16px;
    border-right: 1px solid #e4e7ec;
    font: 700 25px/44px 'Inter', sans-serif;
    color: #000;
    letter-spacing: -0.5px;
}

.devices {
    width: 91px;
    height: 44px;
    padding-left: 8px;
    display: flex;
    align-items: center;
    gap: 6px;
    border-right: 1px solid #e4e7ec;
}

.device {
    width: 34px;
    height: 34px;
    display: flex;
    align-items: center;
    justify-content: center;
    border-radius: 4px;
}

.device.selected {
    background-color: #e7f0ff;
}

.preview-note {
    margin-left: 663px;
    font-family: 'Liberation Sans', sans-serif;
    color: #16171a;
}

.back-editor {
    margin-left: auto;
    font-family: 'Inter', sans-serif;
    color: #116dff;
}

.publish {
    width: 84px;
    height: 30px;
    margin: 0 16px 0 27px;
    border: none;
    border-radius: 15px;
    background-color: #116dff;
    color: #fff;
    font: 500 14px 'Inter', sans-serif;
}

.page {
    flex: 1;
    display: flex;
    min-height: 0;
}

.site {
    flex: 1;
    min-width: 0;
}

.upgrade-banner {
    height: 51px;
    display: flex;
    align-items: center;
    justify-content: center;
    gap: 5px;
    background-color: #eeeff1;
    border-bottom: 4px solid #9c1680;
    font: 14.7px 'Liberation Sans', sans-serif;
    color: #22242a;
}

.upgrade-btn {
    width: 114px;
    height: 37px;
    background: none;
    border: 1px solid #a6167f;
    border-radius: 19px;
    color: #a6167f;
    font: 14.5px 'Liberation Sans', sans-serif;
}

.services {
    padding-left: 117px;
}

.services h1 {
    margin: 0;
    padding: 96px 0 0 29px;
    font: 300 46px/60px 'Inter', sans-serif;
    color: #f2f2f2;
    height: 186px;
}

.service-grid {
    display: grid;
    grid-template-columns: 594px 601px 470px;
    grid-auto-rows: 431px;
    row-gap: 95px;
}

.card {
    width: 464px;
    height: 431px;
    display: flex;
    flex-direction: column;
    align-items: center;
    padding-top: 89px;
    border: 1px solid #b8b8b8;
    border-radius: 17px;
}

.card.wide {
    width: 470px;
}

.card.row-two {
    padding-top: 97px;
}

.card h3 {
    margin: 0;
    font: 400 21.5px/26px 'Inter', sans-serif;
    color: #f2f2f2;
}

.card h3.low {
    margin-top: 16px;
}

.card h3.nudge {
    margin-left: 5px;
}

.card h3.nudge-more {
    margin-left: 10px;
}

.card h3.shift-left {
    margin-right: 2px;
}

.service-icon {
    fill: none;
    stroke: #fff;
    stroke-width: 15;
    stroke-linecap: round;
    stroke-linejoin: round;
}

.compass {
    width: 150px;
    height: 160px;
    margin: 9px 15px 0 0;
}

.structure {
    width: 160px;
    height: 160px;
    margin: 3px 13px 0 0;
    stroke-width: 16;
}

.wrench {
    width: 150px;
    height: 150px;
    margin: 14px 12px 0 0;
}

.scrollbar {
    width: 15px;
    flex-shrink: 0;
    background-color: #f9f9f9;
    position: relative;
}

.arrow-up,
.arrow-down {
    position: absolute;
    left: 3px;
    width: 0;
    height: 0;
    border-left: 4.5px solid transparent;
    border-right: 4.5px solid transparent;
}

.arrow-up {
    top: 10px;
    border-bottom: 5px solid #808080;
}

.arrow-down {
    bottom: 6px;
    border-top: 5px solid #808080;
}

.thumb {
    position: absolute;
    top: 391px;
    left: 3px;
    width: 10px;
    height: 111px;
    background-color: #8b8b8b;
    border-radius: 5px;
}

/* taskbar */
.taskbar {
    height: 40px;
    display: flex;
    background-color: #101010;
    flex-shrink: 0;
    position: relative;
}

.task {
    width: 49px;
    height: 40px;
    display: flex;
    align-items: center;
    justify-content: center;
    position: relative;
    flex-shrink: 0;
}

.tb {
    width: 24px;
    height: 24px;
}

.task.on::after {
    content: "";
    position: absolute;
    left: 4px;
    right: 5px;
    bottom: 0;
    height: 2px;
    background-color: #9a4db5;
}

.task.current {
    background-color: #333;
}

.task.current::after {
    left: 0;
    right: 1px;
}

.badge {
    position: absolute;
    right: 5px;
    bottom: 4px;
    width: 16px;
    height: 16px;
    border-radius: 50%;
    background: #e5484d;
    color: #fff;
    font: 10px/16px 'Noto Sans', sans-serif;
    text-align: center;
}

.tb-cmd {
    font: 6px 'Liberation Mono', monospace;
    fill: #ddd;
}

.tb-letter {
    font: 700 12px 'Liberation Sans', sans-serif;
    fill: #fff;
}

.tb-ae {
    font: 700 13px 'Liberation Sans', sans-serif;
    fill: #b78ae8;
}

.tb-pr {
    font: 700 13px 'Liberation Sans', sans-serif;
    fill: #d56ee8;
}

.tb-ps {
    font: 700 13px 'Liberation Sans', sans-serif;
    fill: #31a8ff;
}

.tray {
    margin-left: auto;
    display: flex;
    align-items: center;
    gap: 8px;
    padding-right: 24px;
    color: #fff;
    font-size: 11.5px;
}

.lang {
    margin-left: 1px;
}

.clock {
    display: flex;
    flex-direction: column;
    align-items: center;
    line-height: 19px;
    margin-left: 2px;
    padding-top: 2px;
}

.notif {
    width: 18px;
    height: 18px;
    margin-left: 9px;
}
```
